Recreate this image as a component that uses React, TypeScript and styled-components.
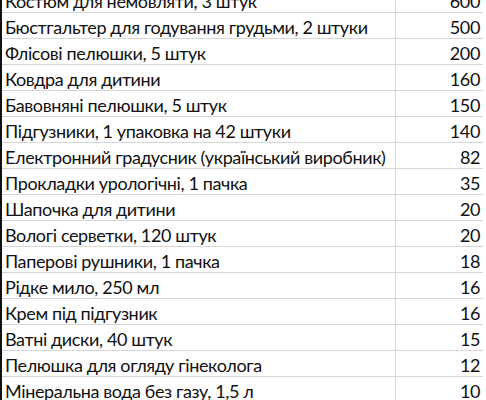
import { Fragment } from "react";
import styled, { createGlobalStyle } from "styled-components";

const GlobalStyle = createGlobalStyle`
  html, body {
    margin: 0;
    padding: 0;
    background: #ffffff;
    overflow: hidden;
  }
`;

const items: { name: string; price: number }[] = [
  { name: "Костюм для немовляти, 3 штук", price: 600 },
  { name: "Бюстгальтер для годування грудьми, 2 штуки", price: 500 },
  { name: "Флісові пелюшки, 5 штук", price: 200 },
  { name: "Ковдра для дитини", price: 160 },
  { name: "Бавовняні пелюшки, 5 штук", price: 150 },
  { name: "Підгузники, 1 упаковка на 42 штуки", price: 140 },
  { name: "Електронний градусник (український виробник)", price: 82 },
  { name: "Прокладки урологічні, 1 пачка", price: 35 },
  { name: "Шапочка для дитини", price: 20 },
  { name: "Вологі серветки, 120 штук", price: 20 },
  { name: "Паперові рушники, 1 пачка", price: 18 },
  { name: "Рідке мило, 250 мл", price: 16 },
  { name: "Крем під підгузник", price: 16 },
  { name: "Ватні диски, 40 штук", price: 15 },
  { name: "Пелюшка для огляду гінеколога", price: 12 },
  { name: "Мінеральна вода без газу, 1,5 л", price: 10 },
];

//таблиця обрізана зверху, тому перший рядок видно лише частково
const Sheet = styled.div`
  width: 486px;
  margin-top: -13px;
  display: grid;
  grid-template-columns: 393px 1px 87px;
  border-left: 2px solid #111;
  border-right: 3px solid #111;
  font-family: Lato, "Open Sans", sans-serif;
  font-size: 18px;
  letter-spacing: -0.38px;
  color: #111;
`;

const Cell = styled.div<{ $right?: boolean }>`
  height: 25px;
  border-bottom: 1px solid #d6d6d6;
  display: flex;
  align-items: flex-end;
  justify-content: ${(props) => (props.$right ? "flex-end" : "flex-start")};
  padding: ${(props) => (props.$right ? "0 3px 0 0" : "0 0 0 3px")};
  line-height: 22px;
  white-space: nowrap;
  overflow: hidden;
`;

const GridLine = styled.div`
  background: #d6d6d6;
`;

export default function App() {
  return (
    <>
      <GlobalStyle />
      <Sheet>
        {items.map((item, i) => (
          <Fragment key={i}>
            <Cell>{item.name}</Cell>
            <GridLine />
            <Cell $right>{item.price}</Cell>
          </Fragment>
        ))}
      </Sheet>
    </>
  );
}
